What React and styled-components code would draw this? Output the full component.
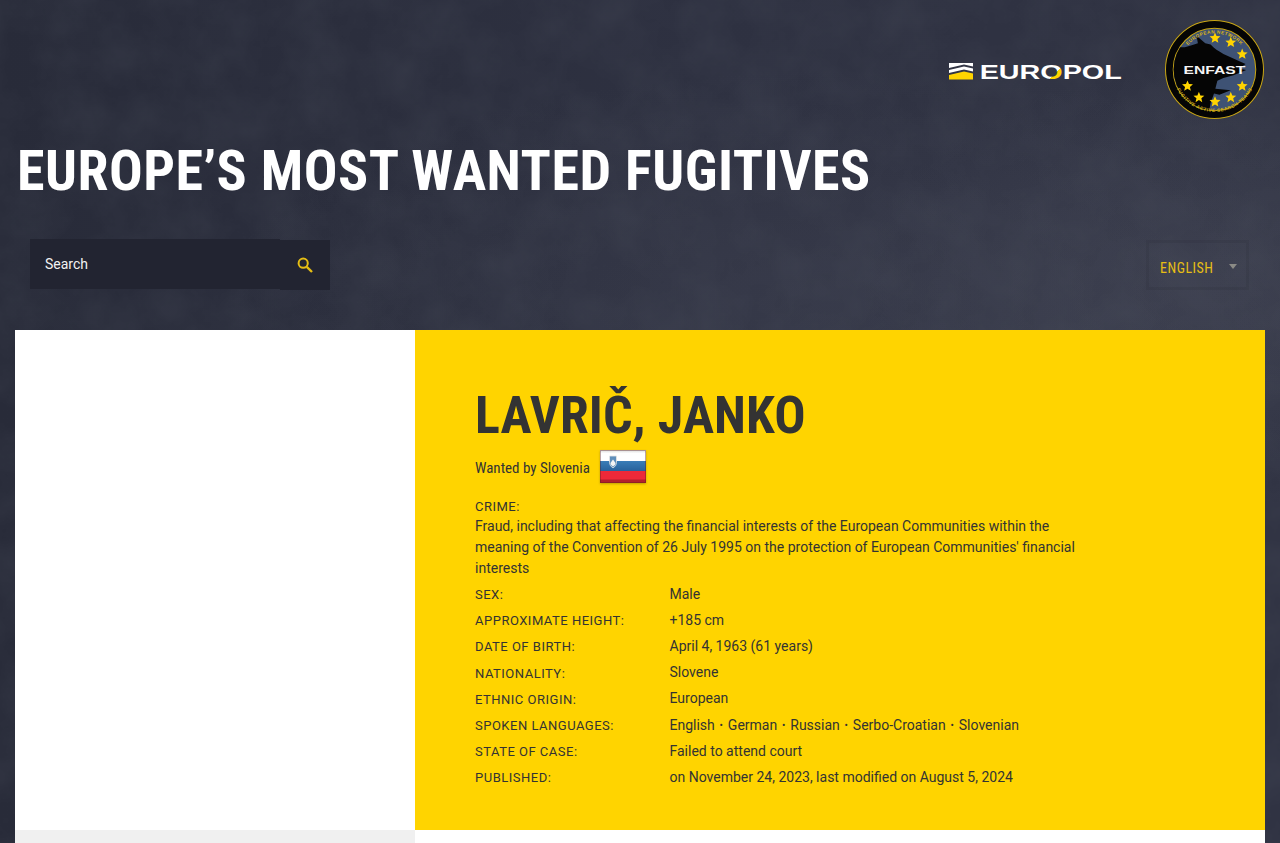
import React from "react";
import styled, { createGlobalStyle } from "styled-components";

const noise = `url("data:image/svg+xml,%3Csvg xmlns='http://www.w3.org/2000/svg' width='1280' height='843'%3E%3Cfilter id='n' x='0' y='0' width='100%25' height='100%25'%3E%3CfeTurbulence type='fractalNoise' baseFrequency='.02' numOctaves='6' seed='11' stitchTiles='stitch'/%3E%3CfeColorMatrix values='0 0 0 0 .08 0 0 0 0 .09 0 0 0 0 .12 0 0 0 .35 -.1'/%3E%3C/filter%3E%3Crect width='1280' height='843' filter='url(%23n)'/%3E%3C/svg%3E")`;

const GlobalStyle = createGlobalStyle`
  html, body { margin: 0; padding: 0; }
  body { font-family: Roboto, "Liberation Sans", sans-serif; color: #333; }
`;

const Page = styled.div`
  height: 100vh;
  overflow: hidden;
  background-color: #2b2e3c;
  background-image: ${noise},
    radial-gradient(ellipse 620px 230px at 840px 300px, rgba(74, 77, 92, 0.3), rgba(74, 77, 92, 0) 100%),
    radial-gradient(ellipse 340px 220px at 1200px 290px, rgba(80, 83, 98, 0.36), rgba(80, 83, 98, 0) 100%),
    linear-gradient(90deg, #282b39, #2e3141 55%, #303343);
`;

const Header = styled.header`
  display: flex;
  justify-content: flex-end;
  align-items: center;
  height: 99px;
  padding: 20px 16px 0 0;
  gap: 43px;
`;

const EuropolMark = styled.svg`
  display: block;
  width: 173px;
  height: 28px;
  margin-top: 7px;
`;

const EnfastMark = styled.svg`
  display: block;
  width: 99px;
  height: 99px;
`;

const Title = styled.h1`
  margin: 19px 0 0 17px;
  font-family: "Roboto Condensed", Roboto, sans-serif;
  font-stretch: condensed;
  font-size: 56px;
  line-height: 66px;
  font-weight: 700;
  color: #fff;
  letter-spacing: 0.5px;
  text-transform: uppercase;
  white-space: nowrap;
`;

const Toolbar = styled.div`
  display: flex;
  justify-content: space-between;
  align-items: flex-start;
  margin-top: 36px;
  padding: 0 31px 0 30px;
  height: 90px;
`;

const SearchForm = styled.form`
  display: flex;
  align-items: flex-start;
  margin: 0;
`;

const SearchInput = styled.input`
  box-sizing: border-box;
  width: 250px;
  height: 50px;
  margin-top: -1px;
  padding: 0 15px;
  border: 0;
  outline: 0;
  background: #222431;
  color: #fff;
  font: 400 14px Roboto, sans-serif;
  &::placeholder { color: #f2f2f2; opacity: 1; }
`;

const SearchButton = styled.button`
  display: flex;
  align-items: center;
  justify-content: center;
  width: 50px;
  height: 50px;
  padding: 0;
  border: 0;
  background: #222431;
`;

const SearchGlyph = styled.svg`
  display: block;
  width: 16px;
  height: 16px;
`;

const LangSelect = styled.div`
  box-sizing: border-box;
  display: flex;
  align-items: center;
  justify-content: space-between;
  width: 103px;
  height: 50px;
  padding: 5px 9px 0 11px;
  border: 3px solid rgba(30, 32, 42, 0.1);
  color: #e6be14;
  font-family: "Roboto Condensed", Roboto, sans-serif;
  font-stretch: condensed;
  font-size: 14px;
  letter-spacing: 0.5px;
`;

const LangArrow = styled.span`
  width: 0;
  height: 0;
  margin-top: -3px;
  border-left: 4px solid transparent;
  border-right: 4px solid transparent;
  border-top: 5px solid #8b8b86;
`;

const Panel = styled.main`
  display: grid;
  grid-template-columns: 400px 850px;
  margin: 0 15px;
  background: #fff;
`;

const PhotoColumn = styled.div`
  height: 513px;
  background: linear-gradient(#fff 500px, #f0f0f0 500px);
`;

const Details = styled.section`
  box-sizing: border-box;
  height: 500px;
  padding: 56px 0 0 60px;
  background: #ffd400;
`;

const Name = styled.h2`
  margin: 0;
  font-family: "Roboto Condensed", Roboto, sans-serif;
  font-stretch: condensed;
  font-size: 52px;
  line-height: 60px;
  font-weight: 700;
  color: #333;
  letter-spacing: 0.15px;
  white-space: nowrap;
`;

const WantedRow = styled.div`
  display: flex;
  align-items: center;
  gap: 10px;
  height: 36px;
  margin-top: 2px;
`;

const WantedText = styled.span`
  padding-top: 4px;
  font-family: "Roboto Condensed", Roboto, sans-serif;
  font-stretch: condensed;
  font-size: 15px;
  color: #333;
`;

const Flag = styled.svg`
  display: block;
  width: 46px;
  height: 33px;
  filter: drop-shadow(0 1px 1px rgba(0, 0, 0, 0.25));
`;

const CrimeBlock = styled.div`
  width: 625px;
  margin-top: 13px;
`;

const Label = styled.div`
  font-size: 13px;
  letter-spacing: 0.5px;
  text-transform: uppercase;
  color: #333;
  line-height: 20px;
`;

const CrimeText = styled.p`
  margin: -1px 0 0;
  font-size: 14px;
  line-height: 21px;
  color: #333;
`;

const Facts = styled.dl`
  display: grid;
  grid-template-columns: 194.5px 1fr;
  grid-auto-rows: 26.2px;
  align-items: center;
  margin: 2px 0 0;
`;

const Term = styled(Label).attrs({ as: "dt" })`
  padding-top: 2px;
`;

const Value = styled.dd`
  margin: 0;
  font-size: 14px;
  line-height: 21px;
  color: #333;
`;

const Lang = styled.span`
  & + &::before {
    content: "•";
    font-size: 10px;
    margin: 0 5px 0 4.7px;
    vertical-align: 1px;
  }
`;

const EuropolLogo = () => (
  <EuropolMark viewBox="0 -4 173 28">
    <defs>
      <linearGradient id="europolO" gradientUnits="userSpaceOnUse" x1="100" y1="3" x2="114" y2="17">
        <stop offset="0.5" stopColor="#fff" />
        <stop offset="0.5" stopColor="#ffd400" />
      </linearGradient>
    </defs>
    <path d="M0 0 H24 V3.5 L15 1.5 L0 5 Z" fill="#fff" />
    <path d="M0 7 L15 3.5 L24 5.5 V8.5 L15 6.5 L0 10 Z" fill="#fff" />
    <path d="M0 12 L15 8.5 L24 10.5 V16.5 H0 Z" fill="#ffd400" />
    <text
      x="30.7"
      y="16"
      fontFamily="Liberation Sans"
      fontWeight="700"
      fontSize="20"
      fill="#fff"
      textLength="142"
      lengthAdjust="spacingAndGlyphs"
    >
      EUR<tspan fill="url(#europolO)">O</tspan>POL
    </text>
  </EuropolMark>
);

const starSpots = [
  [225, 85], [272, 98], [306, 133], [306, 228],
  [272, 262], [225, 275], [177, 262], [143, 228],
];

const starPath = (cx, cy, r) => {
  const pts = [];
  for (let i = 0; i < 10; i++) {
    const rad = i % 2 ? r * 0.45 : r;
    const a = (Math.PI / 5) * i - Math.PI / 2;
    pts.push(`${(cx + rad * Math.cos(a)).toFixed(1)},${(cy + rad * Math.sin(a)).toFixed(1)}`);
  }
  return pts.join(" ");
};

const EnfastLogo = () => (
  <EnfastMark viewBox="76 31 295 295">
    <defs>
      <clipPath id="enfastInner">
        <circle cx="223.5" cy="178.5" r="122" />
      </clipPath>
      <path id="ringTop" d="M116 178.5 A107.5 107.5 0 0 1 331 178.5" />
      <path id="ringBottom" d="M97 178.5 A126.5 126.5 0 0 0 350 178.5" />
    </defs>
    <circle cx="223.5" cy="178.5" r="146" fill="#050505" stroke="#c9a614" strokeWidth="3" />
    <circle cx="223.5" cy="178.5" r="123" fill="#3e5274" stroke="#c9a614" strokeWidth="3" />
    <g clipPath="url(#enfastInner)">
      <path
        fill="#050505"
        d="M95 112 L135 112 C150 108 162 104 174 100 L170 78 L196 100 L212 104 C222 116 236 124 250 132
           L316 162 L296 176 L318 180 L280 196 L250 204 L232 212 L226 236 L272 240 L238 254 L222 250
           L212 278 L204 320 L90 320 Z"
      />
    </g>
    <text x="223.5" y="191" textAnchor="middle" fontFamily="Liberation Sans" fontWeight="700" fontSize="32" fill="#f4f4f4" textLength="184" lengthAdjust="spacingAndGlyphs">
      ENFAST
    </text>
    {starSpots.map(([x, y]) => (
      <polygon key={`${x}-${y}`} points={starPath(x, y, 17)} fill="#ffd400" />
    ))}
    <text fontFamily="Liberation Sans" fontWeight="700" fontSize="14" letterSpacing="1.5" fill="#d8b418">
      <textPath href="#ringTop" startOffset="50%" textAnchor="middle">EUROPEAN NETWORK</textPath>
    </text>
    <text fontFamily="Liberation Sans" fontWeight="700" fontSize="14" letterSpacing="1.5" fill="#d8b418">
      <textPath href="#ringBottom" startOffset="50%" textAnchor="middle">FUGITIVE ACTIVE SEARCH TEAMS</textPath>
    </text>
  </EnfastMark>
);

const SloveniaFlag = () => (
  <Flag viewBox="0 0 46 33">
    <defs>
      <linearGradient id="flagWhite" x1="0" y1="0" x2="0" y2="1">
        <stop offset="0" stopColor="#d8d8d8" />
        <stop offset="0.3" stopColor="#fff" />
      </linearGradient>
      <linearGradient id="flagBlue" x1="0" y1="0" x2="0" y2="1">
        <stop offset="0" stopColor="#3a7db8" />
        <stop offset="1" stopColor="#265f98" />
      </linearGradient>
    </defs>
    <rect x="0" y="0" width="46" height="11" fill="url(#flagWhite)" />
    <rect x="0" y="11" width="46" height="11" fill="url(#flagBlue)" />
    <rect x="0" y="21" width="46" height="12" fill="#ed2939" />
    <rect x="0" y="29.5" width="46" height="3.5" fill="#b3202c" />
    <rect x="0.5" y="0.5" width="45" height="32" fill="none" stroke="rgba(90,30,30,.4)" />
    <path d="M9.5 6 H16.5 V12.5 Q16.5 16 13 18 Q9.5 16 9.5 12.5 Z" fill="#5f8fbb" stroke="#e6e6e6" strokeWidth="0.8" />
    <path d="M10.5 13 L13 9.5 L15.5 13 Q15.5 15 13 16.5 Q10.5 15 10.5 13 Z" fill="#f4f4f4" />
  </Flag>
);

const facts = [
  ["Sex:", "Male"],
  ["Approximate height:", "+185 cm"],
  ["Date of birth:", "April 4, 1963 (61 years)"],
  ["Nationality:", "Slovene"],
  ["Ethnic origin:", "European"],
  ["Spoken languages:", ["English", "German", "Russian", "Serbo-Croatian", "Slovenian"]],
  ["State of case:", "Failed to attend court"],
  ["Published:", "on November 24, 2023, last modified on August 5, 2024"],
];

export default function App() {
  return (
    <Page>
      <GlobalStyle />
      <Header>
        <EuropolLogo />
        <EnfastLogo />
      </Header>
      <Title>Europe’s most wanted fugitives</Title>
      <Toolbar>
        <SearchForm>
          <SearchInput placeholder="Search" />
          <SearchButton type="button">
            <SearchGlyph viewBox="0 0 16 16" fill="none" stroke="#e6be14">
              <circle cx="6.2" cy="6.2" r="4.6" strokeWidth="2" />
              <path d="M9.8 9.8 L15 15" strokeWidth="2.4" />
            </SearchGlyph>
          </SearchButton>
        </SearchForm>
        <LangSelect>
          ENGLISH
          <LangArrow />
        </LangSelect>
      </Toolbar>
      <Panel>
        <PhotoColumn />
        <Details>
          <Name>LAVRIČ, JANKO</Name>
          <WantedRow>
            <WantedText>Wanted by Slovenia</WantedText>
            <SloveniaFlag />
          </WantedRow>
          <CrimeBlock>
            <Label>Crime:</Label>
            <CrimeText>
              Fraud, including that affecting the financial interests of the European Communities within the
              meaning of the Convention of 26 July 1995 on the protection of European Communities' financial
              interests
            </CrimeText>
          </CrimeBlock>
          <Facts>
            {facts.map(([term, value]) => (
              <React.Fragment key={term}>
                <Term>{term}</Term>
                <Value>
                  {Array.isArray(value) ? value.map((l) => <Lang key={l}>{l}</Lang>) : value}
                </Value>
              </React.Fragment>
            ))}
          </Facts>
        </Details>
      </Panel>
    </Page>
  );
}
